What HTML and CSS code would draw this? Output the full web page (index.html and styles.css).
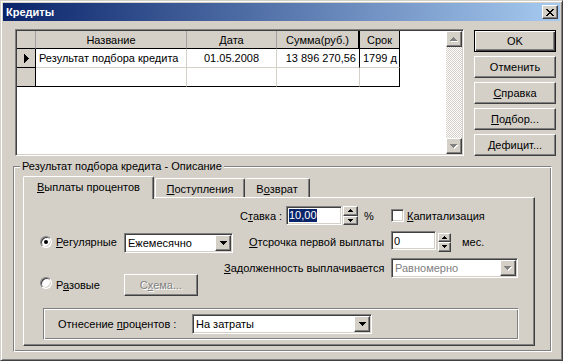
FILE: index.html
```html
<!DOCTYPE html>
<html lang="ru">
  <head>
    <meta charset="UTF-8" />
    <title>Кредиты</title>
    <link rel="stylesheet" href="styles.css">
  </head>
  <body>
    <div class="window">
      <div class="titlebar">
        <span class="title">Кредиты</span>
        <span class="close raised">
          <svg width="8" height="7" viewBox="0 0 8 7"><path d="M0 0h2v1H0zM6 0h2v1H6zM1 1h2v1H1zM5 1h2v1H5zM2 2h4v1H2zM3 3h2v1H3zM2 4h4v1H2zM1 5h2v1H1zM5 5h2v1H5zM0 6h2v1H0zM6 6h2v1H6z" fill="#000"/></svg>
        </span>
      </div>

      <div class="content">
        <div class="top">
          <div class="grid sunken">
            <div class="dbgrid">
              <div class="cell corner"></div>
              <div class="cell head">Название</div>
              <div class="cell head">Дата</div>
              <div class="cell head head-sum">Сумма(руб.)</div>
              <div class="cell head last-col">Срок</div>

              <div class="cell ind">
                <svg width="5" height="9" viewBox="0 0 5 9"><path d="M0 0h1v9H0zM1 1h1v7H1zM2 2h1v5H2zM3 3h1v3H3zM4 4h1v1H4z" fill="#000"/></svg>
              </div>
              <div class="cell">Результат подбора кредита</div>
              <div class="cell center">01.05.2008</div>
              <div class="cell right sum-sel">13 896 270,56</div>
              <div class="cell last-col">1799 д</div>

              <div class="cell ind last-row"></div>
              <div class="cell last-row"></div>
              <div class="cell last-row"></div>
              <div class="cell last-row"></div>
              <div class="cell last-row last-col"></div>
            </div>

            <div class="vscroll">
              <div class="sb-btn raised">
                <svg width="8" height="5" viewBox="0 0 8 5"><path d="M4 1h1v1H4zM3 2h3v1H3zM2 3h5v1H2zM1 4h7v1H1z" fill="#fff"/><path d="M3 0h1v1H3zM2 1h3v1H2zM1 2h5v1H1zM0 3h7v1H0z" fill="#808080"/></svg>
              </div>
              <div class="sb-track"></div>
              <div class="sb-btn raised">
                <svg width="8" height="5" viewBox="0 0 8 5"><path d="M1 1h7v1H1zM2 2h5v1H2zM3 3h3v1H3zM4 4h1v1H4z" fill="#fff"/><path d="M0 0h7v1H0zM1 1h5v1H1zM2 2h3v1H2zM3 3h1v1H3z" fill="#808080"/></svg>
              </div>
            </div>
          </div>

          <div class="buttons">
            <button class="btn default">OK</button>
            <button class="btn raised">Отменить</button>
            <button class="btn raised"><u>С</u>правка</button>
            <button class="btn raised"><u>П</u>одбор...</button>
            <button class="btn raised"><u>Д</u>ефицит...</button>
          </div>
        </div>

        <div class="group etched">
          <span class="caption">Результат подбора кредита - Описание</span>

          <div class="tabs">
            <div class="tab active"><u>В</u>ыплаты процентов</div>
            <div class="tab tab-in"><u>П</u>оступления</div>
            <div class="tab">В<u>о</u>зврат</div>
          </div>

          <div class="page">
            <div class="row row-rate">
              <span class="lbl lbl-rate">С<u>т</u>авка :</span>
              <div class="edit sunken edit-rate"><span class="sel">10,00</span></div>
              <div class="spin spin-rate">
                <div class="spin-btn raised">
                  <svg width="5" height="3" viewBox="0 0 5 3"><path d="M2 0h1v1H2zM1 1h3v1H1zM0 2h5v1H0z" fill="#000"/></svg>
                </div>
                <div class="spin-btn raised">
                  <svg width="5" height="3" viewBox="0 0 5 3"><path d="M0 0h5v1H0zM1 1h3v1H1zM2 2h1v1H2z" fill="#000"/></svg>
                </div>
              </div>
              <span class="pct">%</span>
              <span class="check sunken"></span>
              <span class="check-lbl"><u>К</u>апитализация</span>
            </div>

            <div class="row row-regular">
              <span class="radio on"></span>
              <span class="lbl lbl-radio"><u>Р</u>егулярные</span>
              <div class="combo sunken combo-period">
                <span class="combo-text">Ежемесячно</span>
                <span class="drop raised">
                  <svg width="7" height="4" viewBox="0 0 7 4"><path d="M0 0h7v1H0zM1 1h5v1H1zM2 2h3v1H2zM3 3h1v1H3z" fill="#000"/></svg>
                </span>
              </div>
              <span class="lbl lbl-delay"><u>О</u>тсрочка первой выплаты</span>
              <div class="edit sunken edit-delay">0</div>
              <div class="spin spin-delay">
                <div class="spin-btn raised">
                  <svg width="5" height="3" viewBox="0 0 5 3"><path d="M2 0h1v1H2zM1 1h3v1H1zM0 2h5v1H0z" fill="#000"/></svg>
                </div>
                <div class="spin-btn raised">
                  <svg width="5" height="3" viewBox="0 0 5 3"><path d="M0 0h5v1H0zM1 1h3v1H1zM2 2h1v1H2z" fill="#000"/></svg>
                </div>
              </div>
              <span class="unit">мес.</span>
            </div>

            <div class="row row-debt">
              <span class="lbl lbl-debt"><u>З</u>адолженность выплачивается</span>
              <div class="combo sunken combo-debt disabled">
                <span class="combo-text">Равномерно</span>
                <span class="drop raised">
                  <svg width="8" height="5" viewBox="0 0 8 5"><path d="M1 1h7v1H1zM2 2h5v1H2zM3 3h3v1H3zM4 4h1v1H4z" fill="#fff"/><path d="M0 0h7v1H0zM1 1h5v1H1zM2 2h3v1H2zM3 3h1v1H3z" fill="#808080"/></svg>
                </span>
              </div>
            </div>

            <div class="row row-once">
              <span class="radio"></span>
              <span class="lbl lbl-radio">Р<u>а</u>зовые</span>
              <button class="btn raised btn-scheme" disabled>С<u>х</u>ема...</button>
            </div>

            <div class="subgroup etched">
              <span class="lbl lbl-alloc">Отнесение <u>п</u>роцентов :</span>
              <div class="combo sunken combo-alloc">
                <span class="combo-text">На затраты</span>
                <span class="drop raised">
                  <svg width="7" height="4" viewBox="0 0 7 4"><path d="M0 0h7v1H0zM1 1h5v1H1zM2 2h3v1H2zM3 3h1v1H3z" fill="#000"/></svg>
                </span>
              </div>
            </div>
          </div>
        </div>
      </div>
    </div>
  </body>
</html>
```

FILE: styles.css
```css
body {
  margin: 0;
  background: #d4d0c8;
  font-family: "Liberation Sans", Arial, sans-serif;
  font-size: 11px;
  color: #000;
}

u {
  text-underline-offset: 1px;
}

/* 3D looks */
.raised {
  box-sizing: border-box;
  background: #d4d0c8;
  border: 1px solid;
  border-color: #fff #404040 #404040 #fff;
  box-shadow: inset -1px -1px 0 #808080;
}

.sunken {
  box-sizing: border-box;
  background: #fff;
  border: 1px solid;
  border-color: #808080 #fff #fff #808080;
  box-shadow: inset 1px 1px 0 #404040, inset -1px -1px 0 #d4d0c8;
  padding: 1px;
}

.etched {
  box-sizing: border-box;
  border: 1px solid;
  border-color: #808080 #fff #fff #808080;
  box-shadow: inset 1px 1px 0 #fff, inset -1px -1px 0 #808080;
}

/* window */
.window {
  width: 563px;
  height: 361px;
  box-sizing: border-box;
  border: 1px solid;
  border-color: #d4d0c8 #404040 #404040 #d4d0c8;
  box-shadow: inset 1px 1px 0 #fff, inset -1px -1px 0 #808080;
  padding: 2px;
  background: #d4d0c8;
}

.titlebar {
  height: 18px;
  display: flex;
  align-items: center;
  justify-content: space-between;
  padding: 0 2px 0 3px;
  background: linear-gradient(to right, #0a246a, #a6caf0);
}

.title {
  color: #fff;
  font-weight: bold;
  font-size: 11px;
}

.close {
  width: 16px;
  height: 14px;
  display: flex;
  align-items: center;
  justify-content: center;
}

.content {
  padding: 8px 4px 0 10px;
}

.top {
  display: flex;
}

/* data grid */
.grid {
  margin-left: 2px;
  width: 449px;
  height: 127px;
  display: flex;
}

.dbgrid {
  display: grid;
  grid-template-columns: 19px 151px 90px 83px 40px;
  grid-template-rows: 18px 19px 19px;
  align-self: flex-start;
}

.cell {
  box-sizing: border-box;
  border-right: 1px solid #d4d0c8;
  border-bottom: 1px solid #d4d0c8;
  padding: 0 3px;
  white-space: nowrap;
  overflow: hidden;
  display: flex;
  align-items: center;
}

.cell.center {
  justify-content: center;
}

.cell.right {
  justify-content: flex-end;
}

.cell.head,
.cell.corner {
  background: #d4d0c8;
  border-right-color: #a0a0a0;
  border-bottom-color: #000;
  justify-content: center;
}

.cell.head-sum {
  border-right: 2px solid #000;
}

.cell.sum-sel {
  border-right-color: #000;
}

.cell.ind {
  background: #d4d0c8;
  border-right-color: #000;
  border-bottom-color: #000;
  justify-content: center;
  padding: 0;
}

.cell.last-row {
  border-bottom-color: #000;
}

.cell.last-col {
  border-right-color: #000;
}

.vscroll {
  margin-left: auto;
  width: 16px;
  display: flex;
  flex-direction: column;
}

.sb-btn {
  height: 16px;
  display: flex;
  align-items: center;
  justify-content: center;
}

.sb-track {
  flex: 1;
  background: repeating-conic-gradient(#d4d0c8 0 25%, #fff 0 50%) 0 0 / 2px 2px;
}

/* buttons */
.btn {
  font: inherit;
  color: #000;
  padding: 0;
  margin: 0;
}

.buttons {
  margin: 1px 0 0 10px;
  width: 82px;
  display: flex;
  flex-direction: column;
  gap: 4px;
}

.buttons .btn {
  height: 22px;
}

.btn.default {
  box-sizing: border-box;
  background: #d4d0c8;
  border: 1px solid #000;
  box-shadow: inset 1px 1px 0 #fff, inset -1px -1px 0 #404040, inset -2px -2px 0 #808080;
}

/* group box */
.group {
  position: relative;
  margin: 10px 4px 0 0;
  height: 186px;
  padding: 9px 0 0 9px;
}

.caption {
  position: absolute;
  top: -7px;
  left: 6px;
  padding: 0 2px;
  line-height: 13px;
  background: #d4d0c8;
}

.tabs {
  display: flex;
  align-items: flex-end;
  height: 21px;
}

.tab {
  box-sizing: border-box;
  height: 19px;
  background: #d4d0c8;
  border-top: 1px solid #fff;
  border-left: 1px solid #fff;
  border-right: 1px solid #404040;
  border-radius: 2px 2px 0 0;
  box-shadow: inset -1px 0 0 #808080;
  display: flex;
  align-items: center;
  justify-content: center;
  padding-top: 1px;
}

.tab:nth-child(2) {
  width: 90px;
  margin-left: 1px;
}

.tab:nth-child(3) {
  width: 65px;
  border-left: none;
}

.tab.active {
  position: relative;
  z-index: 1;
  width: 131px;
  height: 23px;
  margin-bottom: -2px;
  padding-bottom: 3px;
}

.page {
  box-sizing: border-box;
  width: 512px;
  height: 149px;
  border: 1px solid;
  border-color: #fff #404040 #404040 #fff;
  box-shadow: inset -1px -1px 0 #808080;
  padding-top: 8px;
}

.row {
  display: flex;
  align-items: center;
}

.lbl {
  display: inline-block;
  white-space: nowrap;
}

.row-rate {
  height: 19px;
  padding-left: 216px;
}

.lbl-rate {
  width: 46px;
}

.edit {
  height: 19px;
  display: flex;
  align-items: center;
  padding-left: 2px;
}

.edit-rate {
  width: 56px;
}

.sel {
  background: #0a246a;
  color: #fff;
  line-height: 13px;
}

.spin {
  display: flex;
  flex-direction: column;
  height: 19px;
}

.spin-rate {
  width: 15px;
  margin-left: 1px;
}

.spin-delay {
  width: 13px;
  margin-left: 2px;
}

.spin-btn {
  flex: 1;
  display: flex;
  align-items: center;
  justify-content: center;
}

.pct {
  width: 27px;
  margin-left: 6px;
}

.check {
  width: 13px;
  height: 13px;
}

.check-lbl {
  margin-left: 3px;
}

.row-regular {
  height: 22px;
  margin-top: 6px;
  padding-left: 16px;
}

.radio {
  box-sizing: border-box;
  width: 12px;
  height: 12px;
  border-radius: 50%;
  border: 1px solid;
  border-color: #808080 #fff #fff #808080;
  box-shadow: inset 1px 1px 0 #404040, inset -1px -1px 0 #d4d0c8;
  background: #fff;
  display: flex;
  align-items: center;
  justify-content: center;
}

.radio.on::after {
  content: "";
  width: 4px;
  height: 4px;
  border-radius: 50%;
  background: #000;
}

.lbl-radio {
  width: 68px;
  margin-left: 4px;
}

.combo {
  height: 20px;
  display: flex;
}

.combo-text {
  flex: 1;
  padding-left: 2px;
  display: flex;
  align-items: center;
  white-space: nowrap;
}

.drop {
  width: 16px;
  display: flex;
  align-items: center;
  justify-content: center;
}

.combo-period {
  width: 109px;
  margin-top: 2px;
}

.lbl-delay {
  width: 142px;
  margin-left: 16px;
}

.edit-delay {
  width: 45px;
  margin-bottom: 3px;
}

.unit {
  margin-left: 11px;
}

.row-debt {
  height: 20px;
  margin-top: 5px;
  padding-left: 200px;
}

.lbl-debt {
  width: 167px;
}

.combo-debt {
  width: 127px;
}

.combo.disabled .combo-text {
  color: #808080;
}

.row-once {
  height: 22px;
  margin-top: -4px;
  padding-left: 16px;
}

.row-once .radio {
  margin-bottom: 4px;
}

.btn-scheme {
  width: 74px;
  height: 22px;
  color: #808080;
  text-shadow: 1px 1px 0 #fff;
}

.subgroup {
  margin: 12px 0 0 19px;
  width: 476px;
  height: 32px;
  display: flex;
  align-items: center;
  padding-left: 14px;
}

.lbl-alloc {
  width: 134px;
}

.combo-alloc {
  width: 180px;
}
```
